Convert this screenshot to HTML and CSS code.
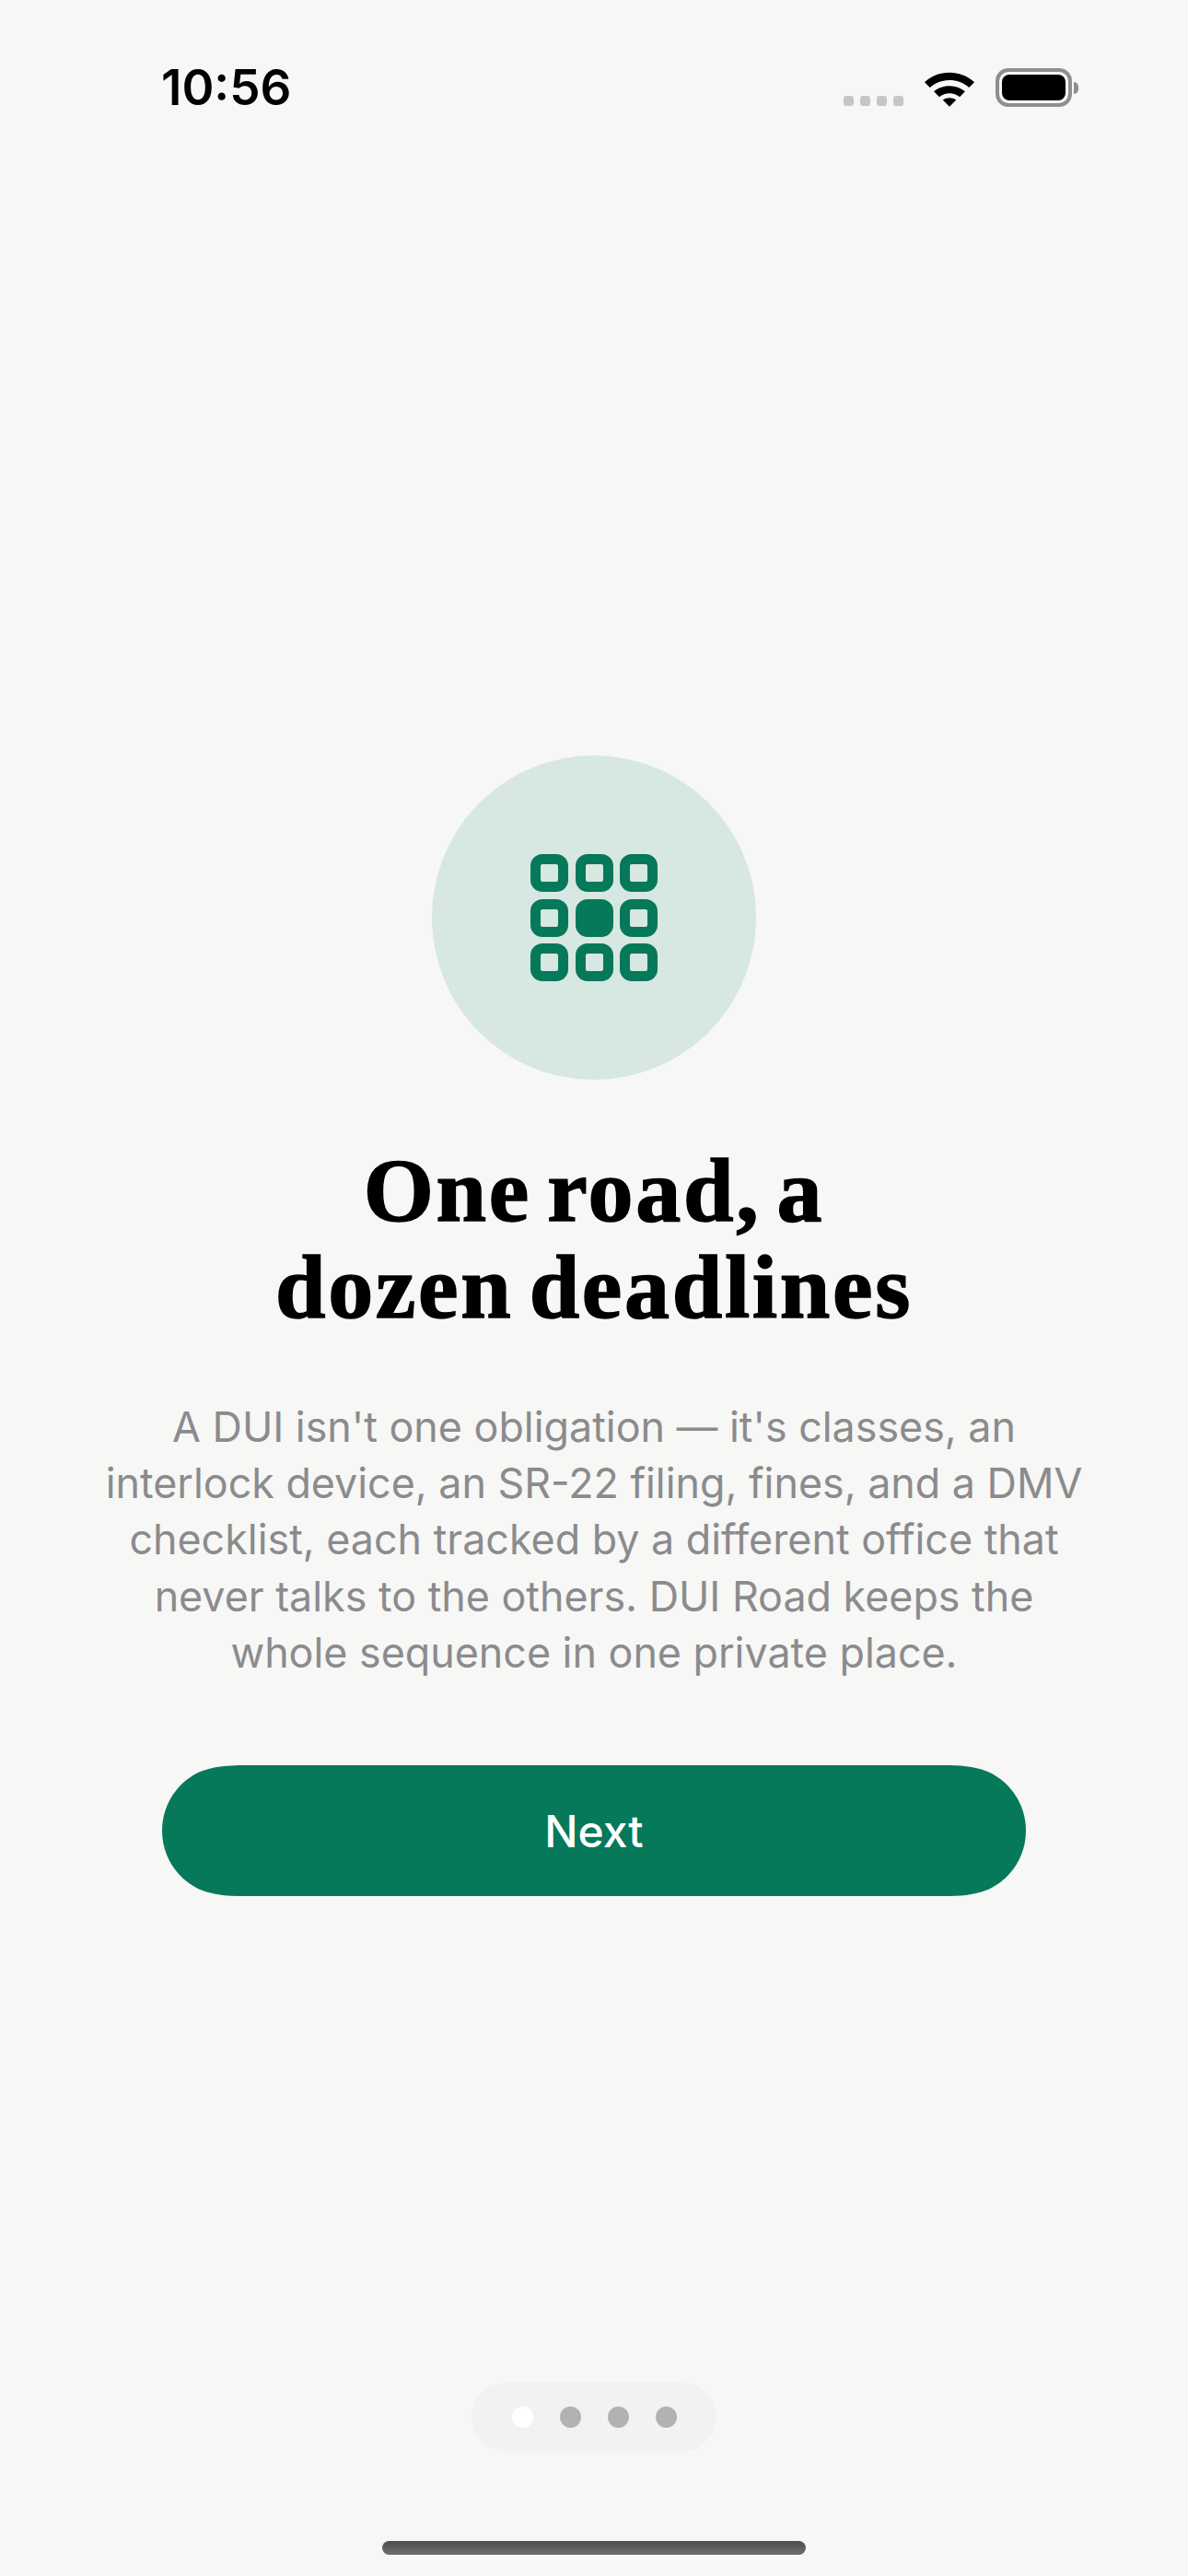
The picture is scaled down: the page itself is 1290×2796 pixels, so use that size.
FILE: index.html
```html
<!DOCTYPE html>
<html lang="en">
<head>
  <meta charset="UTF-8" />
  <meta name="viewport" content="width=device-width, initial-scale=1.0" />
  <title>DUI Road</title>
  <link rel="stylesheet" href="styles.css">
</head>
<body>
  <div class="status-bar">
    <span class="time">10:56</span>
    <div class="status-icons">
      <div class="signal">
        <span></span><span></span><span></span><span></span>
      </div>
      <svg class="wifi" width="56" height="41" viewBox="0 0 58 42">
        <path d="M1 14.5 C16.5 0 41.5 0 57 14.5 L51 20.5 C38.5 9.5 19.5 9.5 7 20.5 Z" />
        <path d="M11.5 25 C21 16.5 37 16.5 46.5 25 L40.5 31 C33.5 25.5 24.5 25.5 17.5 31 Z" />
        <path d="M21.5 34.5 C26 31.5 32 31.5 36.5 34.5 L29 42 Z" />
      </svg>
      <div class="battery">
        <div class="battery-body"><div class="battery-fill"></div></div>
        <div class="battery-cap"></div>
      </div>
    </div>
  </div>

  <main class="intro">
    <div class="intro-badge">
      <div class="tile-grid">
        <span class="tile"></span><span class="tile"></span><span class="tile"></span>
        <span class="tile"></span><span class="tile solid"></span><span class="tile"></span>
        <span class="tile"></span><span class="tile"></span><span class="tile"></span>
      </div>
    </div>
    <h1>One road, a<br>dozen deadlines</h1>
    <p>A DUI isn't one obligation — it's classes, an<br>interlock device, an SR-22 filing, fines, and a DMV<br>checklist, each tracked by a different office that<br>never talks to the others. DUI Road keeps the<br>whole sequence in one private place.</p>
    <button class="next-btn">Next</button>
  </main>

  <div class="pager">
    <span class="dot active"></span><span class="dot"></span><span class="dot"></span><span class="dot"></span>
  </div>
  <div class="home-indicator"></div>
</body>
</html>
```

FILE: styles.css
```css
html, body {
  margin: 0; padding: 0; height: 100%;
}
body {
  display: flex; flex-direction: column; align-items: center;
  height: 2796px;
  background: #f7f7f5;
  font-family: Inter, "Liberation Sans", sans-serif;
  overflow: hidden;
}

/* status bar */
.status-bar {
  display: flex; justify-content: space-between; align-items: center;
  box-sizing: border-box;
  width: 100%;
  height: 190px;
  padding: 0 119px 0 175px;
  flex-shrink: 0;
}
.time {
  font-size: 53px;
  font-weight: 600;
  color: #000;
}
.status-icons {
  display: flex; align-items: center;
  gap: 22px;
}
.signal {
  display: flex; gap: 7px;
  align-self: flex-end;
  margin-bottom: 1px;
}
.signal span {
  width: 11px; height: 11px;
  border-radius: 3px;
  background: #c6c6c6;
}
.wifi { fill: #000; }
.battery {
  display: flex; align-items: center;
  gap: 2px;
}
.battery-body {
  box-sizing: border-box;
  width: 83px; height: 42px;
  padding: 3px;
  border: 4px solid #8e8e8e;
  border-radius: 14px;
}
.battery-fill {
  width: 100%; height: 100%;
  background: #000;
  border-radius: 8px;
}
.battery-cap {
  width: 5px; height: 13px;
  background: #8e8e8e;
  border-radius: 0 5px 5px 0;
}

/* main content */
.intro {
  display: flex; flex-direction: column; align-items: center;
  flex: 1;
  padding-top: 630px;
  text-align: center;
}
.intro-badge {
  display: flex; justify-content: center; align-items: center;
  width: 352px; height: 352px;
  border-radius: 50%;
  background: #d7e7e1;
}
.tile-grid {
  display: grid;
  grid-template-columns: repeat(3, 41px);
  grid-auto-rows: 41px;
  gap: 7.5px;
}
.tile {
  box-sizing: border-box;
  border: 11px solid #05795a;
  border-radius: 13px;
}
.tile.solid {
  background: #05795a;
}
h1 {
  margin: 68px 0 0;
  font-family: "Liberation Serif", serif;
  font-size: 98px;
  line-height: 105px;
  letter-spacing: 2.7px;
  word-spacing: -10px;
  font-weight: 700;
  -webkit-text-stroke: 1.5px #000;
  color: #000;
}
.intro p {
  margin: 69px 0 0;
  font-size: 44.8px;
  line-height: 61.2px;
  color: #8b8b8e;
}
.next-btn {
  width: 938px; height: 142px;
  margin-top: 91px;
  border: none;
  /* continuous corners, border-radius can't do this */
  clip-path: path("M90 0C70 0 58 1 44 6C20 15 0 40 0 71C0 102 20 127 44 136C58 141 70 142 90 142H848C868 142 880 141 894 136C918 127 938 102 938 71C938 40 918 15 894 6C880 1 868 0 848 0Z");
  background: #05795a;
  color: #fff;
  font-family: inherit;
  font-size: 48px;
  font-weight: 500;
}

/* bottom */
.pager {
  display: flex; align-items: center; justify-content: center;
  gap: 29px;
  width: 266px; height: 75px;
  margin-bottom: 97px;
  border-radius: 38px;
  background: #f2f2f0;
}
.dot {
  width: 23px; height: 23px;
  border-radius: 50%;
  background: #b2b2b0;
}
.dot.active {
  background: #fff;
}
.home-indicator {
  flex-shrink: 0;
  width: 460px; height: 15px;
  margin-bottom: 23px;
  border-radius: 8px;
  background: linear-gradient(#4d4d4d, #6f6f6f);
}
```
